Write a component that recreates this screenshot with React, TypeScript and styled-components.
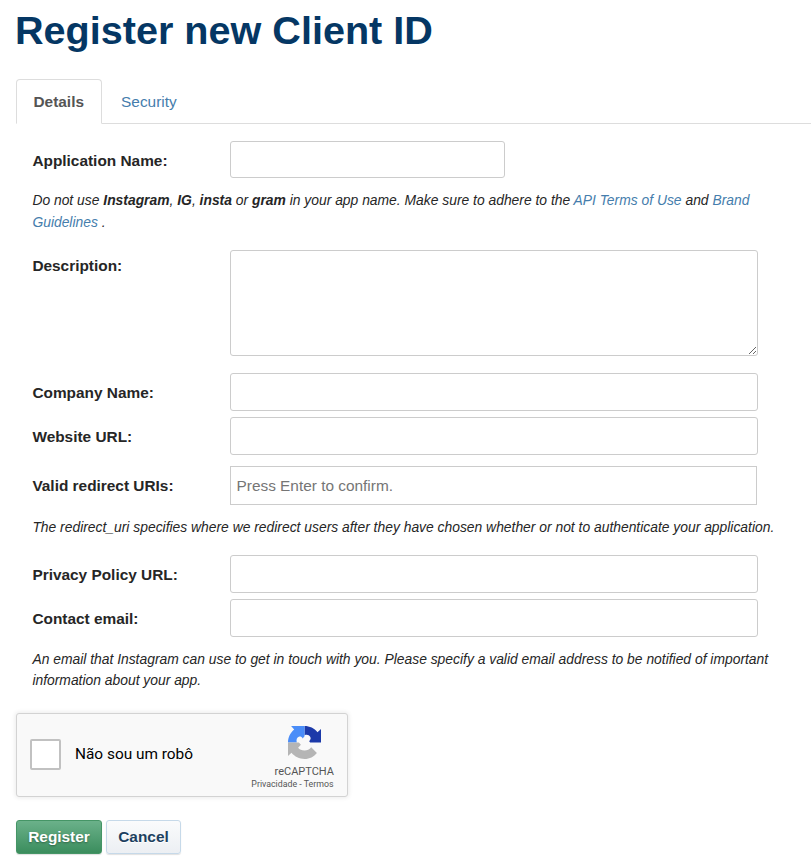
import React from 'react';
import styled, { createGlobalStyle, css } from 'styled-components';

const GlobalStyle = createGlobalStyle`
  *, *::before, *::after { box-sizing: border-box; }
  body {
    margin: 0;
    background: #fff;
    color: #262626;
    font-family: 'Liberation Sans', Arial, Helvetica, sans-serif;
    font-size: 15.4px;
    line-height: 22px;
    overflow: hidden;
  }
`;

const Page = styled.main`
  padding: 0 0 0 16px;
  height: 868px;
`;

const Title = styled.h1`
  margin: 0 0 0 -1px;
  padding-top: 8px;
  height: 79px;
  font-size: 39.6px;
  line-height: 44px;
  font-weight: 700;
  color: #053764;
`;

const Tabs = styled.nav`
  display: flex;
  height: 45px;
  border-bottom: 1px solid #ddd;
`;

const Tab = styled.a<{ $active?: boolean }>`
  height: 45px;
  padding: 11px 16.5px;
  border: 1px solid transparent;
  border-radius: 4px 4px 0 0;
  margin-right: 1.6px;
  color: #457dac;
  text-decoration: none;
  ${(p) =>
    p.$active &&
    css`
      width: 86px;
      border-color: #ddd #ddd #fff;
      color: #555;
      font-weight: 700;
      background: #fff;
    `}
`;

const Form = styled.form`
  padding: 17px 0 0 16.4px;
`;

const Row = styled.div<{ $gap?: number }>`
  display: grid;
  grid-template-columns: 197.6px 528px;
  align-items: start;
  margin-bottom: ${(p) => p.$gap ?? 0}px;
`;

const Label = styled.label<{ $top?: number }>`
  padding-top: ${(p) => p.$top ?? 9}px;
  font-weight: 700;
`;

const fieldStyle = css`
  display: block;
  width: 100%;
  margin: 0;
  padding: 6px;
  border: 1px solid #ccc;
  border-radius: 3px;
  background: #fff;
  color: #262626;
  font: inherit;
  outline: none;
`;

const Input = styled.input<{ $short?: boolean }>`
  ${fieldStyle}
  width: ${(p) => (p.$short ? '275px' : '100%')};
  height: ${(p) => (p.$short ? 37 : 38)}px;
`;

const TokenInput = styled.input`
  ${fieldStyle}
  width: 527px;
  height: 39px;
  padding-left: 5.5px;
  border-radius: 0;
  &::placeholder { color: #757575; }
`;

const TextArea = styled.textarea`
  ${fieldStyle}
  height: 106px;
  resize: vertical;
`;

const Hint = styled.p<{ $gap: number; $line?: number }>`
  margin: 0 0 ${(p) => p.$gap}px;
  width: 745px;
  font-size: 13.86px;
  line-height: ${(p) => p.$line ?? 22}px;
  font-style: italic;
`;

const Link = styled.a`
  color: #457dac;
  text-decoration: none;
`;

const Captcha = styled.section`
  display: flex;
  justify-content: space-between;
  width: 332px;
  height: 84px;
  margin-top: 22px;
  padding: 0 13px;
  border: 1px solid #d3d3d3;
  border-radius: 3px;
  background: #f9f9f9;
  box-shadow: 0 0 4px 1px rgba(0, 0, 0, 0.08);
  font-family: Roboto, 'Liberation Sans', sans-serif;
`;

const CheckLabel = styled.label`
  display: flex;
  align-items: center;
  gap: 14px;
  padding-bottom: 2px;
  font-size: 15.4px;
  color: #000;
`;

const CheckBox = styled.span`
  width: 31px;
  height: 31px;
  border: 2px solid #c1c1c1;
  border-radius: 2px;
  background: #fff;
`;

const Brand = styled.div`
  display: flex;
  flex-direction: column;
  align-items: flex-end;
  color: #555;
`;

const Logo = styled.svg`
  width: 33px;
  height: 33px;
  margin: 12px 13px 5px 0;
`;

const BrandName = styled.span`
  font-size: 11px;
  line-height: 15px;
`;

const BrandLinks = styled.span`
  margin-right: 0.5px;
  font-size: 8.8px;
  line-height: 11px;
`;

const Actions = styled.div`
  display: flex;
  gap: 4px;
  margin-top: 23px;
`;

const Button = styled.button<{ $primary?: boolean }>`
  width: ${(p) => (p.$primary ? 86 : 75)}px;
  height: 34px;
  margin: 0;
  padding: 0;
  border: 1px solid ${(p) => (p.$primary ? '#459566' : '#c6d9e9')};
  border-radius: 3px;
  background: ${(p) => (p.$primary ? 'linear-gradient(#6bb18a, #3b8d5d)' : 'linear-gradient(#fafbfc, #eceff3)')};
  color: ${(p) => (p.$primary ? '#fff' : '#1c3f60')};
  box-shadow: 0 1px 1px rgba(0, 0, 0, 0.12);
  text-shadow: ${(p) => (p.$primary ? '0 1px 2px rgba(0, 0, 0, 0.35)' : '0 1px 0 #fff')};
  font: 700 15.4px/22px 'Liberation Sans', Arial, sans-serif;
`;

function RecaptchaLogo() {
  return (
    <Logo viewBox="0 0 32 32" aria-hidden="true">
      <path fill="#1c3aa9" d="M32 16V3l-3.4 3C25.5 2.2 21 0 16 0v9c2.3-1 4.6-.3 5.5 1.5 1 1.6.4 3-1 4.2L21.5 16z" />
      <path fill="#4a8df8" d="M16 0H3l3 3.4C2.2 6.5 0 11 0 16h8.5c-.7-2.7.2-4.8 2-5.5 1.4-.6 2.8-.1 3.7 1.5L16 10z" />
      <path fill="#b5b5b5" d="M0 16v13l3.4-3C6.5 29.8 11 32 16 32s9.2-2.2 12-5.8L22.5 20.7c-1.6 2.1-4 3.1-6.5 3.1-2.7 0-4.8-.9-6.2-2.7l2.7-2.8-2-2.3z" />
    </Logo>
  );
}

export default function App() {
  return (
    <>
      <GlobalStyle />
      <Page>
        <Title>Register new Client ID</Title>
        <Tabs>
          <Tab $active>Details</Tab>
          <Tab>Security</Tab>
        </Tabs>
        <Form>
          <Row $gap={11}>
            <Label htmlFor="app-name">Application Name:</Label>
            <Input id="app-name" $short />
          </Row>
          <Hint $gap={17}>
            Do not use <b>Instagram</b>, <b>IG</b>, <b>insta</b> or <b>gram</b> in your app name. Make sure to adhere
            to the <Link>API Terms of Use</Link> and <Link>Brand Guidelines</Link> .
          </Hint>
          <Row $gap={17}>
            <Label htmlFor="description" $top={5}>Description:</Label>
            <TextArea id="description" />
          </Row>
          <Row $gap={6}>
            <Label htmlFor="company">Company Name:</Label>
            <Input id="company" />
          </Row>
          <Row $gap={11}>
            <Label htmlFor="website">Website URL:</Label>
            <Input id="website" />
          </Row>
          <Row $gap={11}>
            <Label htmlFor="redirects">Valid redirect URIs:</Label>
            <TokenInput id="redirects" placeholder="Press Enter to confirm." />
          </Row>
          <Hint $gap={17}>
            The redirect_uri specifies where we redirect users after they have chosen whether or not to authenticate
            your application.
          </Hint>
          <Row $gap={6}>
            <Label htmlFor="privacy">Privacy Policy URL:</Label>
            <Input id="privacy" />
          </Row>
          <Row $gap={12}>
            <Label htmlFor="email">Contact email:</Label>
            <Input id="email" />
          </Row>
          <Hint $gap={0} $line={21}>
            An email that Instagram can use to get in touch with you. Please specify a valid email address to be
            notified of important information about your app.
          </Hint>
        </Form>
        <Captcha>
          <CheckLabel>
            <CheckBox />
            Não sou um robô
          </CheckLabel>
          <Brand>
            <RecaptchaLogo />
            <BrandName>reCAPTCHA</BrandName>
            <BrandLinks>Privacidade - Termos</BrandLinks>
          </Brand>
        </Captcha>
        <Actions>
          <Button type="button" $primary>Register</Button>
          <Button type="button">Cancel</Button>
        </Actions>
      </Page>
    </>
  );
}
